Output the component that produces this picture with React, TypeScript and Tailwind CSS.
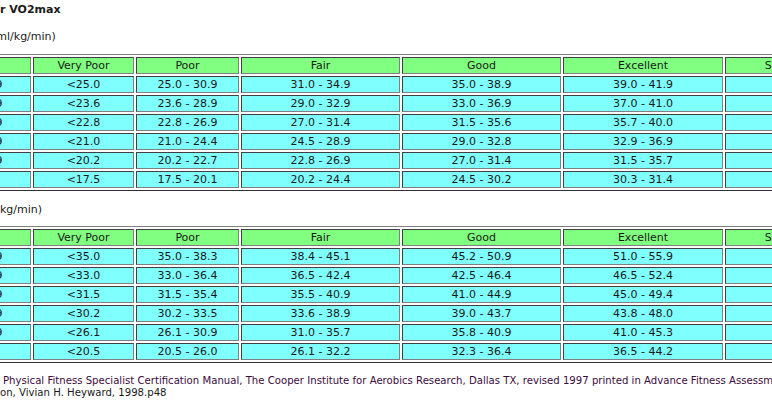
const HEAD = ["Age", "Very Poor", "Poor", "Fair", "Good", "Excellent", "Superior"];
const WIDTHS = ["w-[89px]", "w-[101px]", "w-[103px]", "w-[159px]", "w-[159px]", "w-[160px]", "w-[126px]"];

const WOMEN: string[][] = [
  ["20-29", "<25.0", "25.0 - 30.9", "31.0 - 34.9", "35.0 - 38.9", "39.0 - 41.9", ">41.9"],
  ["30-39", "<23.6", "23.6 - 28.9", "29.0 - 32.9", "33.0 - 36.9", "37.0 - 41.0", ">41.0"],
  ["40-49", "<22.8", "22.8 - 26.9", "27.0 - 31.4", "31.5 - 35.6", "35.7 - 40.0", ">40.0"],
  ["50-59", "<21.0", "21.0 - 24.4", "24.5 - 28.9", "29.0 - 32.8", "32.9 - 36.9", ">36.9"],
  ["60-69", "<20.2", "20.2 - 22.7", "22.8 - 26.9", "27.0 - 31.4", "31.5 - 35.7", ">35.7"],
  ["70+", "<17.5", "17.5 - 20.1", "20.2 - 24.4", "24.5 - 30.2", "30.3 - 31.4", ">31.4"],
];

const MEN: string[][] = [
  ["20-29", "<35.0", "35.0 - 38.3", "38.4 - 45.1", "45.2 - 50.9", "51.0 - 55.9", ">55.9"],
  ["30-39", "<33.0", "33.0 - 36.4", "36.5 - 42.4", "42.5 - 46.4", "46.5 - 52.4", ">52.4"],
  ["40-49", "<31.5", "31.5 - 35.4", "35.5 - 40.9", "41.0 - 44.9", "45.0 - 49.4", ">49.4"],
  ["50-59", "<30.2", "30.2 - 33.5", "33.6 - 38.9", "39.0 - 43.7", "43.8 - 48.0", ">48.0"],
  ["60-69", "<26.1", "26.1 - 30.9", "31.0 - 35.7", "35.8 - 40.9", "41.0 - 45.3", ">45.3"],
  ["70+", "<20.5", "20.5 - 26.0", "26.1 - 32.2", "32.3 - 36.4", "36.5 - 44.2", ">44.2"],
];

const cell =
  "border border-t-[#404040] border-l-[#404040] border-r-[#808080] border-b-[#808080] p-px text-center font-normal whitespace-nowrap";

function NormsTable({ rows }: { rows: string[][] }) {
  return (
    <div className="-ml-[61px]">
      <table className="table-fixed w-[915px] border-separate border-spacing-[2px] border border-t-[#808080] border-l-[#808080] border-r-[#303030] border-b-[#303030]">
        <thead>
          <tr>
            {HEAD.map((h, i) => (
              <th key={h} className={`${cell} ${WIDTHS[i]} bg-[#80ff80]`}>
                {h}
              </th>
            ))}
          </tr>
        </thead>
        <tbody>
          {rows.map((r) => (
            <tr key={r[0]}>
              {r.map((v, i) => (
                <td key={i} className={`${cell} bg-[#80ffff] ${i === 6 ? "pl-[8px]" : ""}`}>
                  {v}
                </td>
              ))}
            </tr>
          ))}
        </tbody>
      </table>
    </div>
  );
}

export default function App() {
  return (
    <div className="w-[772px] h-[405px] overflow-hidden bg-white font-['DejaVu_Sans',Verdana,sans-serif] text-[11px] leading-[13px] text-[#1a1a1a]">
      <p className="pt-[3px] font-bold whitespace-nowrap">r VO2max</p>
      <p className="mt-[14px] -ml-[8px] whitespace-nowrap">(ml/kg/min)</p>
      <div className="mt-[11px]">
        <NormsTable rows={WOMEN} />
      </div>
      <p className="mt-[12px] whitespace-nowrap">kg/min)</p>
      <div className="mt-[10px]">
        <NormsTable rows={MEN} />
      </div>
      <div className="mt-[12px] text-[10.15px] leading-[12px] whitespace-nowrap">
        <p className="pl-[3px] text-[#3c0a3c]">
          Physical Fitness Specialist Certification Manual, The Cooper Institute for Aerobics Research, Dallas TX,
          revised 1997 printed in Advance Fitness Assessment and Exercise Prescripti
        </p>
        <p>on, Vivian H. Heyward, 1998.p48</p>
      </div>
    </div>
  );
}
